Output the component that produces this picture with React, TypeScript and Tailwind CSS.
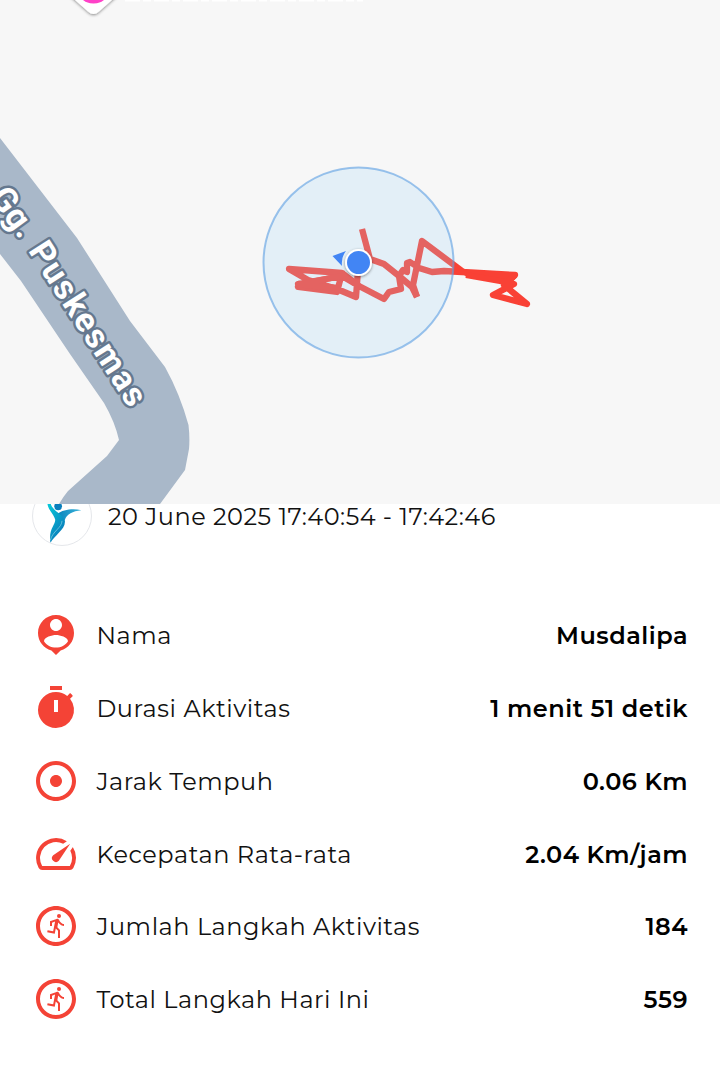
import type { ReactNode } from "react";
import { MdAdjust, MdOutlineRunCircle, MdSpeed, MdTimer } from "react-icons/md";

type Stat = {
  label: string;
  value: string;
  icon: ReactNode;
};

const PersonPin = () => (
  <svg viewBox="0 0 24 24" className="size-12" fill="currentColor">
    <path d="M12 2c-4.97 0-9 4.03-9 9 0 4.17 2.84 7.67 6.69 8.69L12 22l2.31-2.31C18.16 18.67 21 15.17 21 11c0-4.97-4.03-9-9-9zm0 2c1.66 0 3 1.34 3 3s-1.34 3-3 3-3-1.34-3-3 1.34-3 3-3zm0 14.3c-2.5 0-4.71-1.28-6-3.22.03-1.99 4-3.08 6-3.08 1.99 0 5.97 1.09 6 3.08-1.29 1.94-3.5 3.22-6 3.22z" />
  </svg>
);

const stats: Stat[] = [
  { label: "Nama", value: "Musdalipa", icon: <PersonPin /> },
  { label: "Durasi Aktivitas", value: "1 menit 51 detik", icon: <MdTimer className="size-12" /> },
  { label: "Jarak Tempuh", value: "0.06 Km", icon: <MdAdjust className="size-12" /> },
  { label: "Kecepatan Rata-rata", value: "2.04 Km/jam", icon: <MdSpeed className="size-12" /> },
  { label: "Jumlah Langkah Aktivitas", value: "184", icon: <MdOutlineRunCircle className="size-12" /> },
  { label: "Total Langkah Hari Ini", value: "559", icon: <MdOutlineRunCircle className="size-12" /> },
];

const RouteMap = () => (
  <svg viewBox="0 0 720 504" className="block h-[504px] w-full bg-[#f7f7f7]">
    <defs>
      <filter id="shadow" x="-30%" y="-30%" width="160%" height="160%">
        <feDropShadow dx="0" dy="1" stdDeviation="1.5" floodOpacity="0.45" />
      </filter>
      <path id="street" d="M-11 197 L28 251 L134 416" />
    </defs>

    {/* place marker and the foot of its caption, cut off by the top edge */}
    <path d="M66 -8 L88 11.500 Q93.500 16.500 99 11.500 L121 -8 Z" fill="#fff" filter="url(#shadow)" />
    <circle cx="93.500" cy="-7.500" r="17.500" fill="#fff" />
    <circle cx="93.500" cy="-14" r="17.500" fill="#ff41c8" />
    <path d="M125 0.500 H363" stroke="#fff" strokeWidth="2" strokeDasharray="15 3 8 3" />

    <path
      d="M0 138 L77 238 L130 321 L165 367 Q180 394 188.500 425 Q190 438 189 449 L185 470 L160 504 H59 Q63 497 68 491 L107 456 L119 440 Q115 422 104 403 L70 354 L21 281 L0 254 Z"
      fill="#a9b8c9"
    />
    <text
      fontSize="34"
      fontWeight="700"
      fill="#fff"
      stroke="#65788f"
      strokeWidth="5"
      strokeLinejoin="round"
      paintOrder="stroke"
      className="font-['Roboto',sans-serif]"
    >
      <textPath href="#street">
        Gg. <tspan dx="3" letterSpacing="1.4">Puskesmas</tspan>
      </textPath>
    </text>

    <g fill="none" stroke="#f94135" strokeWidth="6.300" strokeLinejoin="round">
      <path d="M362 229 L370 259 L384 264 L399 276 L412 287 L417 297" />
      <path d="M399 276 L401 289 L389 292 L384 299 L359 286 L342 276 L316 281 L298 287 L337 292 L342 273 L289 269 L308 280 L337 289 L356 297 L358 270" />
      <path d="M342 276 L298 284 L337 288 M342 273 L359 286" />
      <path d="M399 276 L403 270 L407 272 L407 263 L410 262 L419 268 L432 272 L444 271 L462 272 L515 275 L512 278 L466 273 L462 271 L422 241 L413 285 L417 297" />
      <path d="M466 275 L500 281 L514 284 L493 295 L527 304 L504 285 L515 275" />
    </g>
    <circle cx="358.500" cy="262.500" r="95" fill="#a0d5f5" fillOpacity="0.230" stroke="#5b9fe2" strokeOpacity="0.600" strokeWidth="2" />
    <path d="M332.500 256 L346 251 Q341 257 342 266 Z" fill="#4285f4" />
    <circle cx="358.500" cy="262.500" r="13.500" fill="#fff" filter="url(#shadow)" />
    <circle cx="358.500" cy="262.500" r="11.500" fill="#4285f4" />
  </svg>
);

const Avatar = () => (
  <svg viewBox="0 0 60 60" className="size-[60px] shrink-0 rounded-full border border-gray-200 bg-white">
    <defs>
      <linearGradient id="arm" x1="0" y1="0" x2="1" y2="0">
        <stop offset="0" stopColor="#0784bd" />
        <stop offset="1" stopColor="#3bb3da" />
      </linearGradient>
      <linearGradient id="body" x1="0" y1="0" x2="0.600" y2="1">
        <stop offset="0" stopColor="#06cfdc" />
        <stop offset="1" stopColor="#0a78b8" />
      </linearGradient>
    </defs>
    <circle cx="26" cy="20" r="4" fill="#087fbd" />
    <path d="M25 28 C31 23 42 22 50 24 C41 25 35 28 33 34 L30 37 Z" fill="url(#arm)" />
    <path d="M15 15 C14 23 22 28 23 34 C23 40 16 43 18 58 C22 50 34 44 33 35 C31 29 25 27 21 22 C19 20 18 17 18 15 Z" fill="url(#body)" />
    <path d="M30 35 C30 42 20 46 18 55" fill="none" stroke="#8fd5e8" strokeWidth="0.700" />
  </svg>
);

const StatRow = ({ label, value, icon }: Stat) => (
  <div className="flex h-[72.8px] items-center">
    <div className="shrink-0 text-[#f44336]">{icon}</div>
    <span className="mt-[2px] ml-[16.4px] whitespace-nowrap tracking-[0.54px]">{label}</span>
    <span className="mt-[2px] ml-auto whitespace-nowrap font-semibold text-black">{value}</span>
  </div>
);

export default function App() {
  return (
    <div className="h-[1080px] w-full overflow-hidden bg-white font-['Montserrat','Inter',sans-serif] text-[24px] leading-8 tracking-[0.5px] text-[#111]">
      <div className="relative z-10">
        <RouteMap />
      </div>
      <div className="-mt-[18px] flex h-[60px] items-center gap-4 px-8">
        <Avatar />
        <span className="mt-px whitespace-nowrap">20 June 2025 17:40:54 - 17:42:46</span>
      </div>
      <div className="mt-[52.8px] px-8">
        {stats.map((stat) => (
          <StatRow key={stat.label} {...stat} />
        ))}
      </div>
    </div>
  );
}
